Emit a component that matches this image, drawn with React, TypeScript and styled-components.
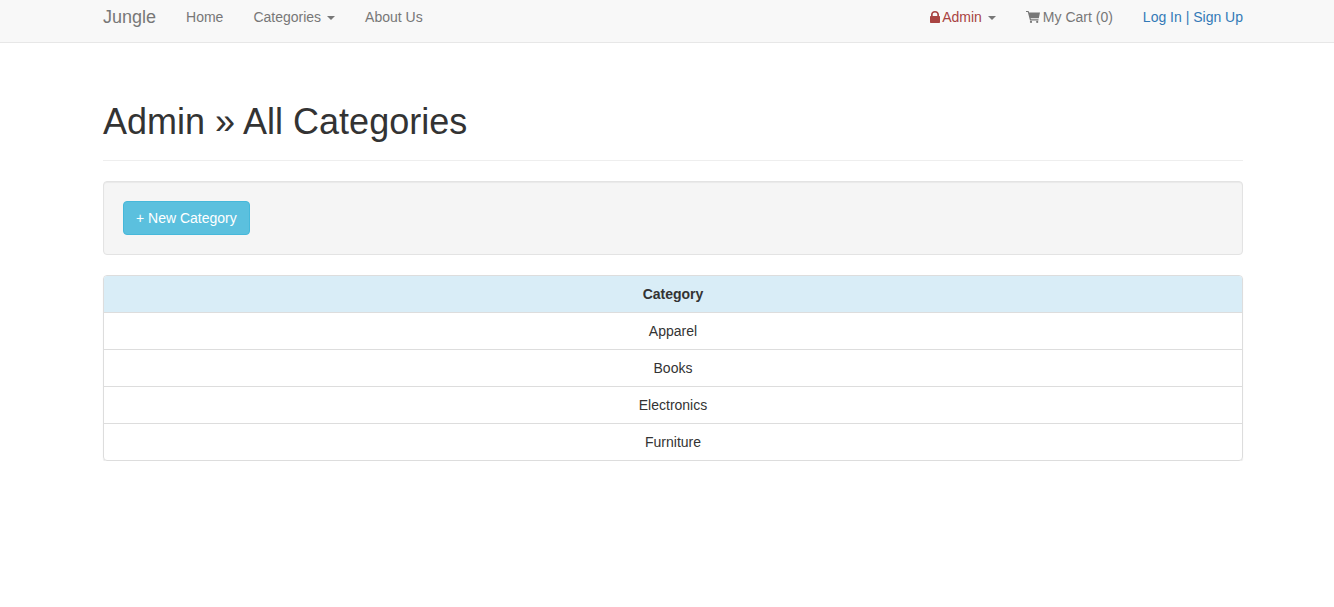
import { createGlobalStyle } from "styled-components";
import styled from "styled-components";

const GlobalStyle = createGlobalStyle`
  html, body {
    margin: 0;
    background: #fff;
    font-family: "Liberation Sans", Arial, sans-serif;
    font-size: 14px;
    line-height: 20px;
    color: #333;
  }
`;

const Navbar = styled.nav`
  box-sizing: border-box;
  height: 43px;
  padding: 0 91px 0 103px;
  display: flex;
  justify-content: space-between;
  background: #f8f8f8;
  border-bottom: 1px solid #e7e7e7;
`;

const NavGroup = styled.div`
  display: flex;
  gap: 30px;
  padding-top: 7px;
`;

const Brand = styled.a`
  font-size: 18px;
  color: #777;
`;

const NavItem = styled.a<{ $tone?: string }>`
  display: flex;
  align-items: center;
  height: 20px;
  color: ${(p) => p.$tone || "#777"};
`;

const LockIcon = styled.svg`
  width: 10px;
  height: 12px;
  margin-right: 2px;
  fill: #a94442;
`;

const CartIcon = styled.svg`
  width: 14px;
  height: 12px;
  margin-right: 3px;
  fill: #777;
`;

const Caret = styled.span`
  width: 0;
  height: 0;
  margin-left: 6px;
  margin-top: 2px;
  border-top: 4px solid #777;
  border-left: 4px solid transparent;
  border-right: 4px solid transparent;
`;

const AuthLinks = styled.div`
  height: 20px;
  color: #337ab7;
`;

const Container = styled.main`
  padding: 0 91px 0 103px;
`;

const PageHeader = styled.div`
  margin: 59px 0 20px;
  padding-bottom: 9px;
  border-bottom: 1px solid #eee;
`;

const Title = styled.h1`
  margin: 0 0 9px;
  font-size: 36px;
  font-weight: 500;
  line-height: 39.6px;
  color: #333;
`;

const Well = styled.div`
  box-sizing: border-box;
  height: 74px;
  padding: 19px;
  margin-bottom: 20px;
  background: #f5f5f5;
  border: 1px solid #e3e3e3;
  border-radius: 4px;
  box-shadow: inset 0 1px 1px rgba(0, 0, 0, 0.05);
`;

const NewButton = styled.button`
  box-sizing: border-box;
  display: block;
  height: 34px;
  padding: 6px 12px;
  font: inherit;
  color: #fff;
  background: #5bc0de;
  border: 1px solid #46b8da;
  border-radius: 4px;
`;

const Panel = styled.div`
  border: 1px solid #ddd;
  border-radius: 4px;
  overflow: hidden;
  box-shadow: 0 1px 1px rgba(0, 0, 0, 0.1);
`;

const Table = styled.table`
  width: 100%;
  border-collapse: collapse;
`;

const HeadCell = styled.th`
  height: 36px;
  padding: 8px;
  box-sizing: border-box;
  font-weight: 700;
  text-align: center;
  background: #d9edf7;
`;

const Cell = styled.td`
  height: 37px;
  padding: 8px;
  box-sizing: border-box;
  text-align: center;
  border-top: 1px solid #ddd;
`;

const categories = ["Apparel", "Books", "Electronics", "Furniture"];

export default function App() {
  return (
    <>
      <GlobalStyle />
      <Navbar>
        <NavGroup>
          <Brand>Jungle</Brand>
          <NavItem>Home</NavItem>
          <NavItem>
            Categories
            <Caret />
          </NavItem>
          <NavItem>About Us</NavItem>
        </NavGroup>
        <NavGroup>
          <NavItem $tone="#a94442">
            <LockIcon viewBox="0 0 10 12">
              <path d="M1 5V3.6C1 1.5 2.7 0 5 0s4 1.5 4 3.6V5h.3c.4 0 .7.3.7.7v5.6c0 .4-.3.7-.7.7H.7c-.4 0-.7-.3-.7-.7V5.7C0 5.3.3 5 .7 5H1zm1.7 0h4.6V3.6C7.3 2.4 6.3 1.6 5 1.6s-2.3.8-2.3 2V5z" />
            </LockIcon>
            Admin
            <Caret />
          </NavItem>
          <NavItem>
            <CartIcon viewBox="0 0 14 12">
              <path d="M0 0h2.6l.5 1.6H14l-1.2 5.7H4.6l.3 1h7.6v1.1H4L1.8 1.1H0V0z" />
              <circle cx="5" cy="10.9" r="1.1" />
              <circle cx="11.2" cy="10.9" r="1.1" />
            </CartIcon>
            My Cart (0)
          </NavItem>
          <AuthLinks>Log In | Sign Up</AuthLinks>
        </NavGroup>
      </Navbar>
      <Container>
        <PageHeader>
          <Title>Admin » All Categories</Title>
        </PageHeader>
        <Well>
          <NewButton>+ New Category</NewButton>
        </Well>
        <Panel>
          <Table>
            <thead>
              <tr>
                <HeadCell>Category</HeadCell>
              </tr>
            </thead>
            <tbody>
              {categories.map((name) => (
                <tr key={name}>
                  <Cell>{name}</Cell>
                </tr>
              ))}
            </tbody>
          </Table>
        </Panel>
      </Container>
    </>
  );
}
